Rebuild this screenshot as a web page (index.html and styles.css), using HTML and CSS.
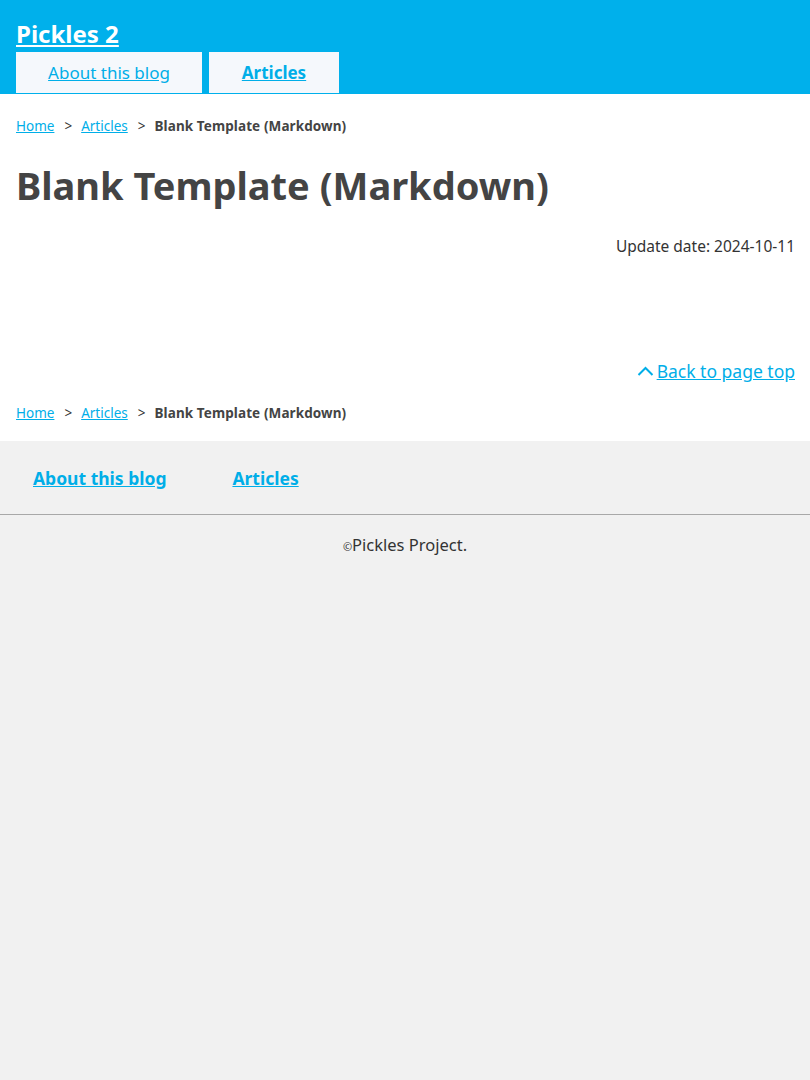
FILE: index.html
```html
<!DOCTYPE html>
<html lang="en">
<head>
<meta charset="utf-8">
<title>Blank Template (Markdown)</title>
<link rel="stylesheet" href="styles.css">
</head>
<body>
<header class="site-header">
  <div class="site-title"><a href="#">Pickles 2</a></div>
  <nav class="global-nav">
    <a class="tab" href="#">About this blog</a>
    <a class="tab tab-current" href="#">Articles</a>
  </nav>
</header>
<main class="page">
  <ul class="breadcrumb">
    <li><a href="#">Home</a></li>
    <li class="sep">&gt;</li>
    <li><a href="#">Articles</a></li>
    <li class="sep">&gt;</li>
    <li class="current">Blank Template (Markdown)</li>
  </ul>
  <h1 class="page-title">Blank Template (Markdown)</h1>
  <p class="update-date">Update date: 2024-10-11</p>
  <div class="content"></div>
  <div class="back-top">
    <a href="#"><svg class="chev" width="17" height="12" viewBox="0 0 17 12"><path d="M1.5 10 L8.5 3 L15.5 10" fill="none" stroke="#00aee8" stroke-width="2"/></svg><span>Back to page top</span></a>
  </div>
  <ul class="breadcrumb breadcrumb-bottom">
    <li><a href="#">Home</a></li>
    <li class="sep">&gt;</li>
    <li><a href="#">Articles</a></li>
    <li class="sep">&gt;</li>
    <li class="current">Blank Template (Markdown)</li>
  </ul>
</main>
<footer class="site-footer">
  <nav class="footer-nav">
    <a href="#">About this blog</a>
    <a href="#">Articles</a>
  </nav>
  <p class="copyright"><span class="copy-mark">©</span>Pickles Project.</p>
</footer>
</body>
</html>
```
FILE: styles.css
```css
html, body {
  margin: 0;
  padding: 0;
}
body {
  font-family: "Noto Sans", "Liberation Sans", sans-serif;
  color: #333;
  background: #f1f1f1;
}
a {
  color: #00aee8;
}
.site-header {
  background: #00b0eb;
  padding: 18px 16px 0 16px;
  height: 76px;
}
.site-title {
  font-size: 24px;
  font-weight: 700;
  line-height: 32px;
}
.site-title a {
  color: #fff;
}
.global-nav {
  display: flex;
  gap: 7px;
  margin-top: 2px;
}
.tab {
  display: block;
  background: #f5f8fc;
  height: 41px;
  line-height: 41px;
  font-size: 17px;
  text-align: center;
}
.tab:first-child {
  width: 186px;
}
.tab-current {
  width: 130px;
  font-weight: 700;
}
.page {
  background: #fff;
  padding: 0 15px 18px 16px;
}
.breadcrumb {
  list-style: none;
  margin: 0;
  display: flex;
  font-size: 13.5px;
  line-height: 20px;
  padding: 22px 0 0 0;
}
.breadcrumb li.sep {
  padding: 0 9px 0 10px;
}
.breadcrumb .current {
  font-weight: 700;
  color: #444;
  letter-spacing: 0.1px;
}
.page-title {
  font-size: 38px;
  font-weight: 700;
  color: #444;
  margin: 0;
  padding-top: 24px;
  line-height: 50px;
}
.update-date {
  text-align: right;
  margin: 0;
  padding-top: 26px;
  font-size: 15.5px;
  line-height: 20px;
}
.content {
  height: 103px;
}
.back-top {
  display: flex;
  justify-content: flex-end;
  font-size: 17.5px;
  line-height: 24px;
}
.back-top a {
  display: flex;
  align-items: center;
  gap: 3px;
  text-decoration: none;
}
.back-top a span {
  text-decoration: underline;
}
.breadcrumb-bottom {
  padding-top: 20px;
}
.site-footer {
  background: #f1f1f1;
}
.footer-nav {
  display: flex;
  gap: 66px;
  padding: 25px 33px 24px 33px;
  border-bottom: 1px solid #a8a8a8;
  font-size: 17.5px;
  font-weight: 700;
  line-height: 24px;
}
.copyright {
  margin: 0;
  text-align: center;
  font-size: 16.5px;
  padding-top: 19px;
  line-height: 22px;
}
.copy-mark {
  font-size: 11px;
}
```
